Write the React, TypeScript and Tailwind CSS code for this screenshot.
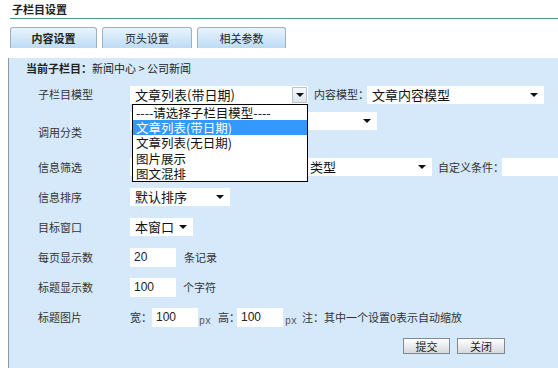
import type { ReactNode } from 'react'

const Arrow = () => (
  <svg width="8" height="4" viewBox="0 0 8 4" className="shrink-0">
    <path d="M0 0h8L4 4z" fill="#111" />
  </svg>
)

function Select({ className, children, arrowBox }: { className: string; children?: ReactNode; arrowBox?: boolean }) {
  return (
    <div className={`flex h-[18px] items-center bg-white ${className}`}>
      <div className="flex-1 whitespace-nowrap pl-[5px] text-[13px] leading-[18px] text-[#111]">{children}</div>
      {arrowBox ? (
        <div className="mr-[1px] flex h-[16px] w-[15px] items-center justify-center border border-[#b8c4cf] bg-gradient-to-b from-[#f4f8fb] to-[#dfe7ee]">
          <Arrow />
        </div>
      ) : (
        <div className="flex w-[16px] justify-center pr-[4px]">
          <Arrow />
        </div>
      )}
    </div>
  )
}

function Row({ label, className, children }: { label: string; className: string; children: ReactNode }) {
  return (
    <div className={`flex items-center pl-[29px] ${className}`}>
      <div className="w-[92px] text-[11px] text-[#333]">{label}</div>
      {children}
    </div>
  )
}

const Input = ({ value, className }: { value: string; className: string }) => (
  <div className={`h-[19px] bg-white pl-[4px] font-['Liberation_Sans',sans-serif] text-[12px] leading-[19px] text-[#222] ${className}`}>
    {value}
  </div>
)

const Px = () => <span className="font-['Liberation_Mono',monospace] text-[10px] text-[#555]">px</span>

const options = ['----请选择子栏目模型----', '文章列表(带日期)', '文章列表(无日期)', '图片展示', '图文混排']

export default function App() {
  return (
    <div className="relative h-[368px] w-[558px] overflow-hidden bg-white font-['Noto_Sans_CJK_SC','Noto_Sans',sans-serif] text-[#222]">
      <div className="ml-[10px] h-[19px] border-b border-[#4a9479] pl-[2px] pt-[2px] text-[11px] font-bold leading-[14px] text-[#222]">
        子栏目设置
      </div>

      <div className="ml-[10px] mt-[8px] flex gap-[5px]">
        <div className="flex h-[21px] w-[87px] items-center justify-center rounded-t-[3px] border border-b-0 border-[#9fb0bf] bg-gradient-to-b from-[#e8f4fd] to-[#bddcf5] text-[11px] font-bold">
          内容设置
        </div>
        <div className="flex h-[21px] w-[90px] items-center justify-center rounded-t-[3px] border border-b-0 border-[#9fb0bf] bg-gradient-to-b from-[#e8f4fd] to-[#bddcf5] text-[11px]">
          页头设置
        </div>
        <div className="flex h-[21px] w-[89px] items-center justify-center rounded-t-[3px] border border-b-0 border-[#9fb0bf] bg-gradient-to-b from-[#e8f4fd] to-[#bddcf5] text-[11px]">
          相关参数
        </div>
      </div>

      <div className="ml-[8px] h-[316px] border-b border-l border-[#8d9aa5] bg-[#d5e9fb]">
        <div className="ml-[17px] mt-[10px] flex h-[20px] items-center text-[11px]">
          <span className="font-bold">当前子栏目：</span>
          <span>新闻中心 &gt; 公司新闻</span>
        </div>

        <Row label="子栏目模型" className="mt-[6px] h-[21px]">
          <div className="relative">
            <Select className="w-[178px]" arrowBox>
              文章列表(带日期)
            </Select>
            <div className="absolute left-[2px] top-[18px] z-10 w-[176px] border border-black bg-white text-[12.5px] text-[#111]">
              {options.map((o, i) => (
                <div
                  key={o}
                  className={`h-[15.4px] whitespace-nowrap pl-[3px] leading-[15.4px] ${i === 1 ? 'bg-[#3399ff] text-white' : ''}`}
                >
                  {o}
                </div>
              ))}
            </div>
          </div>
          <span className="ml-[6px] w-[53px] whitespace-nowrap text-[11px] text-[#333]">内容模型：</span>
          <Select className="w-[177px]">文章内容模型</Select>
        </Row>

        <div className="mt-[7px] flex h-[40px] items-start pl-[29px]">
          <div className="mt-[12px] w-[92px] text-[11px] leading-[17px] text-[#333]">调用分类</div>
          <Select className="w-[247px]" />
        </div>

        <Row label="信息筛选" className="mt-[5px] h-[20px]">
          <Select className="w-[302px]">
            <span className="inline-block w-[175px]" />
            类型
          </Select>
          <span className="ml-[6px] w-[64px] whitespace-nowrap text-[11px] text-[#333]">自定义条件：</span>
          <div className="h-[18px] flex-1 bg-white" />
        </Row>

        <Row label="信息排序" className="mt-[10px] h-[20px]">
          <Select className="w-[100px]">默认排序</Select>
        </Row>

        <Row label="目标窗口" className="mt-[10px] h-[20px]">
          <Select className="w-[63px]">本窗口</Select>
        </Row>

        <Row label="每页显示数" className="mt-[10px] h-[20px]">
          <Input value="20" className="w-[46px]" />
          <span className="ml-[8px] text-[11px] text-[#333]">条记录</span>
        </Row>

        <Row label="标题显示数" className="mt-[10px] h-[20px]">
          <Input value="100" className="w-[46px]" />
          <span className="ml-[7px] text-[11px] text-[#333]">个字符</span>
        </Row>

        <Row label="标题图片" className="mt-[10px] h-[20px]">
          <span className="w-[22px] text-[11px] text-[#333]">宽：</span>
          <Input value="100" className="w-[46px]" />
          <span className="ml-[1px] w-[19px]">
            <Px />
          </span>
          <span className="w-[19px] text-[11px] text-[#333]">高：</span>
          <Input value="100" className="w-[46px]" />
          <span className="ml-[2px] w-[17px]">
            <Px />
          </span>
          <span className="text-[11px] text-[#333]">注：其中一个设置0表示自动缩放</span>
        </Row>

        <div className="mt-[11px] flex justify-end gap-[7px] pr-[53px]">
          <button className="h-[16px] w-[47px] border border-[#7f8a94] bg-gradient-to-b from-[#ffffff] to-[#d6d9dc] text-[11px] leading-[14px] text-[#222]">
            提交
          </button>
          <button className="h-[16px] w-[48px] border border-[#7f8a94] bg-gradient-to-b from-[#ffffff] to-[#d6d9dc] text-[11px] leading-[14px] text-[#222]">
            关闭
          </button>
        </div>
      </div>
    </div>
  )
}
